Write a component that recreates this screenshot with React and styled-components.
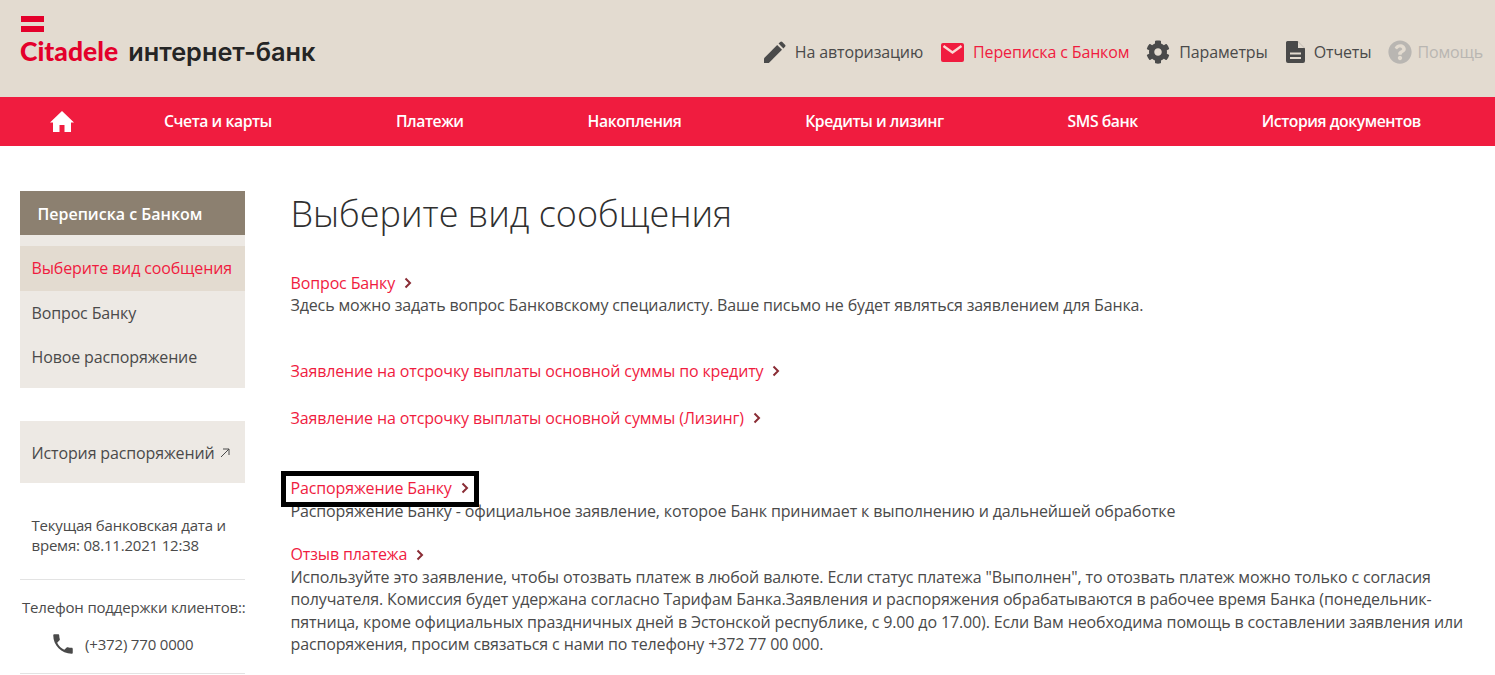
import React from "react";
import styled, { createGlobalStyle } from "styled-components";
import { MdPhone } from "react-icons/md";
import { FaCog, FaQuestionCircle } from "react-icons/fa";

const Global = createGlobalStyle`
  html, body { margin: 0; padding: 0; background: #fff; }
  body { font-family: "Open Sans", "Noto Sans", sans-serif; font-size: 16px; letter-spacing: -0.135px; color: #4a4a4a; overflow: hidden; }
`;

const Page = styled.div`
  width: 1495px;
  height: 675px;
  overflow: hidden;
`;

const Header = styled.header`
  height: 97px;
  background: #e3dbd0;
  display: flex;
  justify-content: space-between;
  padding: 16px 12px 0 20px;
  box-sizing: border-box;
`;

const Logo = styled.div`
  display: flex;
  flex-direction: column;
  gap: 5px;
`;

const LogoMark = styled.div`
  width: 23px;
  height: 16px;
  margin-left: 1px;
  display: flex;
  flex-direction: column;
  justify-content: space-between;
  & > i { display: block; height: 6px; background: #e4002b; }
`;

const LogoText = styled.div`
  display: flex;
  align-items: baseline;
  gap: 10px;
  line-height: 29px;
  white-space: nowrap;
  letter-spacing: 0;
`;

const Brand = styled.span`
  font-family: "Lato", sans-serif;
  font-weight: 900;
  font-size: 26.5px;
  color: #e4002b;
`;

const Product = styled.span`
  font-family: "Inter", sans-serif;
  font-weight: 600;
  font-size: 25.3px;
  color: #252525;
`;

const Tools = styled.nav`
  display: flex;
  align-items: center;
  height: 72px;
  gap: 17px;
`;

const Tool = styled.a`
  display: flex;
  align-items: center;
  gap: ${(p) => p.$gap || 9}px;
  color: ${(p) => (p.$tone === "active" ? "#f01c3f" : p.$tone === "muted" ? "#b9b6b2" : "#4a4a4a")};
  font-size: 16px;
  white-space: nowrap;
  & > svg { display: block; flex: none; }
`;

const MainNav = styled.nav`
  height: 49px;
  background: #f01c3f;
  display: flex;
  align-items: center;
  padding-left: 50px;
`;

const HomeLink = styled.a`
  color: #fff;
  display: flex;
  margin-right: 90px;
  & > svg { display: block; }
`;

const NavItem = styled.a`
  color: #fff;
  font-weight: 600;
  font-size: 15.75px;
  letter-spacing: -0.45px;
  margin-right: 124px;
  margin-top: -2px;
  white-space: nowrap;
`;

const Body = styled.div`
  display: flex;
  padding: 45px 20px 0;
`;

const Sidebar = styled.aside`
  width: 225px;
  flex: none;
`;

const SideTitle = styled.div`
  height: 44px;
  background: #8c8070;
  color: #fff;
  font-weight: 600;
  font-size: 16px;
  letter-spacing: 0;
  line-height: 46px;
  padding-left: 17.5px;
`;

const SideMenu = styled.div`
  background: #ede9e4;
  padding: 11px 0 9px;
`;

const SideItem = styled.div`
  height: ${(p) => (p.$active ? 45 : 44)}px;
  line-height: 44px;
  padding-left: 11.5px;
  background: ${(p) => (p.$active ? "#e3dbd0" : "transparent")};
  color: ${(p) => (p.$active ? "#f01c3f" : "#4a4a4a")};
  white-space: nowrap;
`;

const SideLink = styled.div`
  margin-top: 33px;
  height: 62px;
  line-height: 64px;
  background: #ede9e4;
  padding-left: 11.5px;
  white-space: nowrap;
`;

const Arrow = styled.svg`
  width: 12px;
  height: 12px;
  margin-left: 4px;
`;

const DateInfo = styled.div`
  padding: 32px 0 24px 11.5px;
  font-size: 15px;
  letter-spacing: -0.2px;
  line-height: 20px;
  color: #4a4a4a;
  border-bottom: 1px solid #e3e3e3;
`;

const SupportTitle = styled.div`
  font-size: 15px;
  letter-spacing: -0.18px;
  line-height: 20px;
  margin-top: 17px;
  padding-left: 2px;
  white-space: nowrap;
`;

const Phone = styled.div`
  display: flex;
  align-items: center;
  gap: 9px;
  margin-top: 15px;
  padding: 0 0 17px 30px;
  height: 24px;
  font-size: 15px;
  letter-spacing: -0.17px;
  border-bottom: 1px solid #e3e3e3;
  & > svg { width: 26px; height: 26px; display: block; }
`;

const Main = styled.main`
  margin-left: 45.5px;
  flex: 1;
  min-width: 0;
`;

const Title = styled.h1`
  margin: 0;
  font-weight: 300;
  font-size: 36px;
  letter-spacing: 0;
  line-height: 46px;
  color: #2f2f2f;
`;

const Block = styled.section`
  margin-top: ${(p) => p.$top}px;
`;

const Outlined = styled.span`
  position: relative;
  display: inline-block;
  vertical-align: top;
  &::after {
    content: "";
    position: absolute;
    left: -10px;
    right: -10px;
    top: -6px;
    bottom: -7px;
    border: 5px solid #000;
    pointer-events: none;
    z-index: 1;
  }
`;

const MsgLink = styled.a`
  display: inline-flex;
  align-items: center;
  color: #f01c3f;
  font-size: 16px;
  line-height: 22.4px;
  white-space: nowrap;
`;

const Chevron = styled.svg`
  width: 8px;
  height: 12px;
  margin-left: 9px;
`;

const Desc = styled.p`
  margin: 0;
  font-size: 16px;
  line-height: 22.4px;
  color: #4a4a4a;
`;

const ChevronIcon = () => (
  <Chevron viewBox="0 0 8 12" fill="none" stroke="#8a2c35" strokeWidth="2">
    <path d="M1.5 1.5 6 6l-4.5 4.500" />
  </Chevron>
);

const Pencil = () => (
  <svg width="24" height="24" viewBox="0 0 24 24" fill="#4a4a4a">
    <path d="M2 23v-4.800L15.200 5l4.800 4.800L6.800 23z" />
    <path d="M16.600 3.600 18.200 2a1.500 1.500 0 0 1 2.100 0l2.700 2.700a1.500 1.500 0 0 1 0 2.100l-1.600 1.600z" />
  </svg>
);

const Envelope = () => (
  <svg width="24" height="24" viewBox="0 0 24 24">
    <rect x="1" y="3" width="23" height="19" rx="2" fill="#f01c3f" />
    <path d="M3.500 6 12.500 12.500 21.500 6" fill="none" stroke="#fbd9d4" strokeWidth="2.400" />
  </svg>
);

const DocIcon = () => (
  <svg width="20" height="24" viewBox="0 0 20 24">
    <path d="M2.500 1h10L20 8.500V21a2 2 0 0 1-2 2H3a2 2 0 0 1-2-2V2.500A1.500 1.500 0 0 1 2.500 1z" fill="#4a4a4a" />
    <path d="M13 1.500v6.500h6.500z" fill="#e3dbd0" />
    <path d="M5 13.500h11M5 18h11" stroke="#e3dbd0" strokeWidth="2" />
  </svg>
);

const HomeIcon = () => (
  <svg width="24" height="21" viewBox="0 0 24 21" fill="#fff">
    <path d="M12 0 24 11.500H21V21H14.500V14H9.500V21H3V11.500H0z" />
  </svg>
);

const navItems = ["Счета и карты", "Платежи", "Накопления", "Кредиты и лизинг", "SMS банк", "История документов"];

export default function App() {
  return (
    <Page>
      <Global />
      <Header>
        <Logo>
          <LogoMark><i /><i /></LogoMark>
          <LogoText>
            <Brand>Citadele</Brand>
            <Product>интернет-банк</Product>
          </LogoText>
        </Logo>
        <Tools>
          <Tool><Pencil />На авторизацию</Tool>
          <Tool $tone="active"><Envelope />Переписка с Банком</Tool>
          <Tool><FaCog size={24} />Параметры</Tool>
          <Tool><DocIcon />Отчеты</Tool>
          <Tool $tone="muted" $gap={5}><FaQuestionCircle size={24} />Помощь</Tool>
        </Tools>
      </Header>
      <MainNav>
        <HomeLink><HomeIcon /></HomeLink>
        {navItems.map((n) => <NavItem key={n}>{n}</NavItem>)}
      </MainNav>
      <Body>
        <Sidebar>
          <SideTitle>Переписка с Банком</SideTitle>
          <SideMenu>
            <SideItem $active>Выберите вид сообщения</SideItem>
            <SideItem>Вопрос Банку</SideItem>
            <SideItem>Новое распоряжение</SideItem>
          </SideMenu>
          <SideLink>
            История распоряжений
            <Arrow viewBox="0 0 12 12" fill="none" stroke="#4a4a4a" strokeWidth="1">
              <path d="M2 10 10 2M4 2h6v6" />
            </Arrow>
          </SideLink>
          <DateInfo>Текущая банковская дата и время: 08.11.2021 12:38</DateInfo>
          <SupportTitle>Телефон поддержки клиентов::</SupportTitle>
          <Phone><MdPhone />(+372) 770 0000</Phone>
        </Sidebar>
        <Main>
          <Title>Выберите вид сообщения</Title>
          <Block $top={35}>
            <MsgLink>Вопрос Банку<ChevronIcon /></MsgLink>
            <Desc>Здесь можно задать вопрос Банковскому специалисту. Ваше письмо не будет являться заявлением для Банка.</Desc>
          </Block>
          <Block $top={43}>
            <MsgLink>Заявление на отсрочку выплаты основной суммы по кредиту<ChevronIcon /></MsgLink>
          </Block>
          <Block $top={25}>
            <MsgLink>Заявление на отсрочку выплаты основной суммы (Лизинг)<ChevronIcon /></MsgLink>
          </Block>
          <Block $top={47.5}>
            <Outlined><MsgLink>Распоряжение Банку<ChevronIcon /></MsgLink></Outlined>
            <Desc>Распоряжение Банку - официальное заявление, которое Банк принимает к выполнению и дальнейшей обработке</Desc>
          </Block>
          <Block $top={21.5}>
            <MsgLink>Отзыв платежа<ChevronIcon /></MsgLink>
            <Desc>Используйте это заявление, чтобы отозвать платеж в любой валюте. Если статус платежа "Выполнен", то отозвать платеж можно только с согласия получателя. Комиссия будет удержана согласно Тарифам Банка.Заявления и распоряжения обрабатываются в рабочее время Банка (понедельник-пятница, кроме официальных праздничных дней в Эстонской республике, с 9.00 до 17.00). Если Вам необходима помощь в составлении заявления или распоряжения, просим связаться с нами по телефону +372 77 00 000.</Desc>
          </Block>
        </Main>
      </Body>
    </Page>
  );
}
